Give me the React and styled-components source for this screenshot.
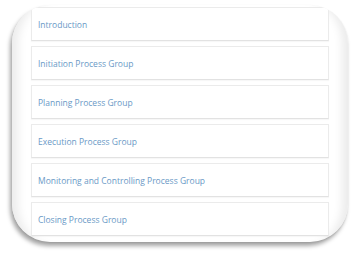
import React from "react";
import styled, { createGlobalStyle } from "styled-components";

const Global = createGlobalStyle`
  html, body { margin: 0; padding: 0; background: #ffffff; }
  body { font-family: "Open Sans", "Liberation Sans", sans-serif; }
`;

const Page = styled.div`
  width: 356px;
  height: 255px;
  box-sizing: border-box;
  padding: 5px 8px 0 12px;
`;

const Card = styled.div`
  height: 237px;
  border-radius: 38px;
  background: #ffffff;
  overflow: hidden;
  box-sizing: border-box;
  padding: 2px 19px 0 19px;
  box-shadow:
    inset 14px 0 10px -8px #ececec,
    inset -14px 0 8px -8px #ececec,
    -2px 4px 4px rgba(0, 0, 0, 0.35),
    0 1px 2px rgba(0, 0, 0, 0.08);
`;

const List = styled.ul`
  list-style: none;
  margin: 0;
  padding: 0;
  display: flex;
  flex-direction: column;
  gap: 5px;
`;

const Row = styled.li`
  height: 34px;
  flex: none;
  box-sizing: border-box;
  display: flex;
  align-items: center;
  padding-left: 6px;
  background: #ffffff;
  border: 1px solid #ebebeb;
  border-bottom-color: #e2e2e2;
  box-shadow: 0 1px 1px rgba(0, 0, 0, 0.03);
  font-size: 8.5px;
  color: #6a99c6;
  white-space: nowrap;
`;

const items = [
  "Introduction",
  "Initiation Process Group",
  "Planning Process Group",
  "Execution Process Group",
  "Monitoring and Controlling Process Group",
  "Closing Process Group",
];

export default function App() {
  return (
    <>
      <Global />
      <Page>
        <Card>
          <List>
            {items.map((t) => (
              <Row key={t}>{t}</Row>
            ))}
          </List>
        </Card>
      </Page>
    </>
  );
}
